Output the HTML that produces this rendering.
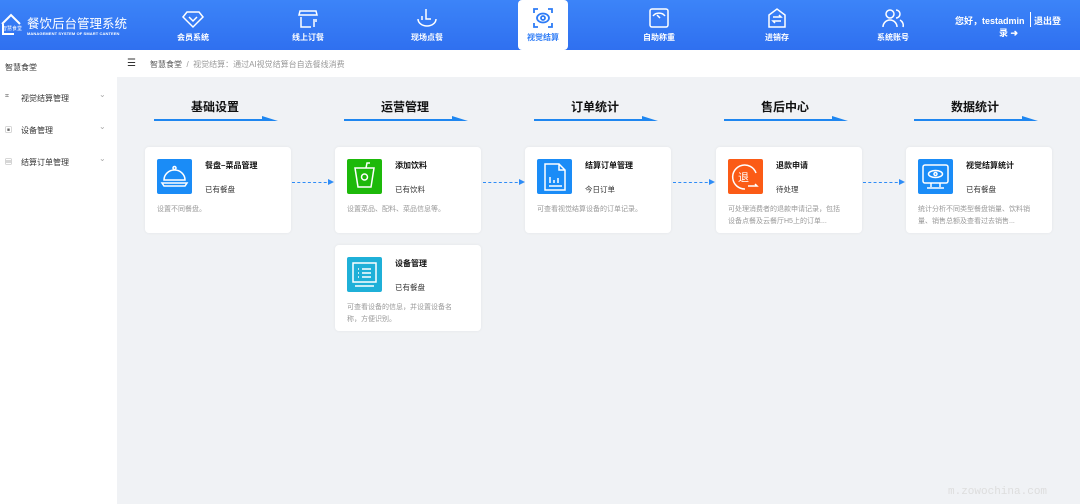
<!DOCTYPE html>
<html><head><meta charset="utf-8"><style>
*{margin:0;padding:0;box-sizing:border-box}
body{width:1080px;height:504px;overflow:hidden;font-family:"Liberation Sans","Noto Sans CJK SC",sans-serif;background:#f0f2f5;position:relative}
.hd{position:absolute;left:0;top:0;width:1080px;height:50px;background:linear-gradient(180deg,#3c84f8,#2f70f0)}
.logo{position:absolute;left:0;top:12px}
.nav{position:absolute;top:0;width:50px;height:50px;text-align:center;color:#fff;font-size:8px;font-weight:bold}
.nav svg{position:absolute;left:13px;top:6px}
.nav span{position:absolute;left:-20px;width:90px;top:32px}
.nav.act{background:#fff;color:#2e7cf6;border-radius:4px}
.sb{position:absolute;left:0;top:50px;width:117px;height:454px;background:#fff}
.sb div{position:absolute;left:0;font-size:8px;color:#333;width:117px;height:12px}
.sb .i{position:absolute;left:5px;color:#666;font-size:7px}
.sb .x{position:absolute;left:21px}
.sb .c{position:absolute;left:99px;color:#aaa;top:-3px}
.bc{position:absolute;left:117px;top:50px;width:963px;height:27px;background:#fff;font-size:8px;color:#999}
.sec{position:absolute;top:98px;width:122px;text-align:center;font-size:12px;font-weight:bold;color:#111}
.ar{position:absolute;top:116px;width:124px;height:6px}
.card{position:absolute;width:146px;height:86px;background:#fff;border-radius:4px;box-shadow:0 0 3px rgba(0,0,0,.06)}
.ic{position:absolute;left:12px;top:12px;width:35px;height:35px;border-radius:2px}
.ic svg{position:absolute;left:0;top:0}
.t{position:absolute;left:60px;top:13px;font-size:8px;font-weight:bold;color:#111}
.s{position:absolute;left:60px;top:37px;font-size:7.5px;color:#333}
.d{position:absolute;left:12px;top:57px;width:112px;font-size:7px;line-height:12px;color:#999}
.dl{position:absolute;top:182px;height:0;border-top:1px dashed #2e8cf6;width:40px}
.dl:after{content:"";position:absolute;right:-2px;top:-4px;border-left:6px solid #2e8cf6;border-top:3.5px solid transparent;border-bottom:3.5px solid transparent}
</style></head><body>
<div class="hd">
 <div class="logo"><svg width="26" height="26" viewBox="0 0 26 26"><path d="M2 12 L11 3 L20 12" stroke="#fff" stroke-width="2" fill="none"/><path d="M3 12 V22 H14" stroke="#fff" stroke-width="2" fill="none"/><text x="2" y="18" font-size="5" fill="#fff" font-family="Noto Sans CJK SC">智慧食堂</text></svg></div>
 <div style="position:absolute;left:27px;top:13px;color:#fff;font-size:12.5px">餐饮后台管理系统</div>
 <div style="position:absolute;left:27px;top:31px;color:#fff;font-size:4px;font-weight:bold;letter-spacing:.1px">MANAGEMENT SYSTEM OF SMART CANTEEN</div>
 <div class="nav" style="left:168px"><svg width="24" height="24" viewBox="0 0 24 24" fill="none" stroke="#fff" stroke-width="1.5"><path d="M6 6h12l4 5-10 10L2 11z"/><path d="M8 11l4 4 4-4"/></svg><span>会员系统</span></div>
 <div class="nav" style="left:283px"><svg width="24" height="24" viewBox="0 0 24 24" fill="none" stroke="#fff" stroke-width="1.5"><path d="M4 5h16l1 4H3z"/><path d="M5 11v10h10M18 13v8M20 13v3"/></svg><span>线上订餐</span></div>
 <div class="nav" style="left:402px"><svg width="24" height="24" viewBox="0 0 24 24" fill="none" stroke="#fff" stroke-width="1.5"><path d="M3 13a9 7 0 0 0 18 0"/><path d="M11 3v10h5M7 10v4"/></svg><span>现场点餐</span></div>
 <div class="nav act" style="left:518px"><svg width="24" height="24" viewBox="0 0 24 24" fill="none" stroke="#2e7cf6" stroke-width="1.8"><path d="M3 7V3h4M17 3h4v4M21 17v4h-4M7 21H3v-4"/><ellipse cx="12" cy="12" rx="6" ry="4.5"/><circle cx="12" cy="12" r="2"/></svg><span>视觉结算</span></div>
 <div class="nav" style="left:634px"><svg width="24" height="24" viewBox="0 0 24 24" fill="none" stroke="#fff" stroke-width="1.5"><rect x="3" y="3" width="18" height="18" rx="2"/><path d="M6 10a7 6 0 0 1 12 0M10 9l3 3"/></svg><span>自助称重</span></div>
 <div class="nav" style="left:752px"><svg width="24" height="24" viewBox="0 0 24 24" fill="none" stroke="#fff" stroke-width="1.5"><path d="M4 9l8-6 8 6v12H4z"/><path d="M8 11h8l-2-2M16 15H8l2 2"/></svg><span>进销存</span></div>
 <div class="nav" style="left:868px"><svg width="24" height="24" viewBox="0 0 24 24" fill="none" stroke="#fff" stroke-width="1.5"><circle cx="9" cy="8" r="4"/><path d="M2 21a7 7 0 0 1 14 0M15 4a4 4 0 0 1 0 8M19 14a6 6 0 0 1 3 7"/></svg><span>系统账号</span></div>
 <div style="position:absolute;left:955px;top:14px;color:#fff;font-size:9px;font-weight:bold">您好，testadmin</div>
 <div style="position:absolute;left:1030px;top:12px;height:15px;border-left:1px solid #fff"></div>
 <div style="position:absolute;left:1034px;top:14px;color:#fff;font-size:9px;font-weight:bold">退出登</div>
 <div style="position:absolute;left:999px;top:26px;color:#fff;font-size:9px;font-weight:bold">录 ➜</div>
</div>
<div class="sb">
 <div style="top:12px"><span style="position:absolute;left:5px">智慧食堂</span></div>
 <div style="top:43px"><span class="i">⌗</span><span class="x">视觉结算管理</span><span class="c">⌄</span></div>
 <div style="top:75px"><span class="i">▣</span><span class="x">设备管理</span><span class="c">⌄</span></div>
 <div style="top:107px"><span class="i">▤</span><span class="x">结算订单管理</span><span class="c">⌄</span></div>
</div>
<div class="bc"><span style="position:absolute;left:10px;top:8px;color:#333;font-size:10px">☰</span><span style="position:absolute;left:33px;top:9px"><b style="color:#555;font-weight:normal">智慧食堂</b> &nbsp;/&nbsp; 视觉结算：通过AI视觉结算台自选餐线消费</span></div>

<div class="sec" style="left:154px">基础设置</div>
<div class="sec" style="left:344px">运营管理</div>
<div class="sec" style="left:534px">订单统计</div>
<div class="sec" style="left:724px">售后中心</div>
<div class="sec" style="left:914px">数据统计</div>
<svg class="ar" style="left:154px" viewBox="0 0 124 6"><path d="M0 3h108V0l16 5H0z" fill="#1e86f0"/></svg>
<svg class="ar" style="left:344px" viewBox="0 0 124 6"><path d="M0 3h108V0l16 5H0z" fill="#1e86f0"/></svg>
<svg class="ar" style="left:534px" viewBox="0 0 124 6"><path d="M0 3h108V0l16 5H0z" fill="#1e86f0"/></svg>
<svg class="ar" style="left:724px" viewBox="0 0 124 6"><path d="M0 3h108V0l16 5H0z" fill="#1e86f0"/></svg>
<svg class="ar" style="left:914px" viewBox="0 0 124 6"><path d="M0 3h108V0l16 5H0z" fill="#1e86f0"/></svg>

<div class="dl" style="left:292px"></div>
<div class="dl" style="left:483px"></div>
<div class="dl" style="left:673px"></div>
<div class="dl" style="left:863px"></div>

<div class="card" style="left:145px;top:147px"><div class="ic" style="background:#1a8cf7"><svg width="35" height="35" viewBox="0 0 35 35" fill="none" stroke="#fff" stroke-width="1.5"><circle cx="17.5" cy="9" r="1.5"/><path d="M7 21a10.5 10 0 0 1 21 0zM5 24h25l-2 3H7z"/></svg></div><div class="t">餐盘–菜品管理</div><div class="s">已有餐盘</div><div class="d">设置不同餐盘。</div></div>
<div class="card" style="left:335px;top:147px"><div class="ic" style="background:#1db90a"><svg width="35" height="35" viewBox="0 0 35 35" fill="none" stroke="#fff" stroke-width="1.5"><path d="M8 9h19l-3 19H11z"/><circle cx="17.5" cy="18" r="3"/><path d="M19 9l1-5h3"/></svg></div><div class="t">添加饮料</div><div class="s">已有饮料</div><div class="d">设置菜品、配料、菜品信息等。</div></div>
<div class="card" style="left:525px;top:147px"><div class="ic" style="background:#1a8cf7"><svg width="35" height="35" viewBox="0 0 35 35" fill="none" stroke="#fff" stroke-width="1.5"><path d="M8 5h14l6 6v20H8zM22 5v6h6"/><path d="M12 27h13M13 18v6M17 21v3M21 19v5"/></svg></div><div class="t">结算订单管理</div><div class="s">今日订单</div><div class="d" style="width:130px">可查看视觉结算设备的订单记录。</div></div>
<div class="card" style="left:716px;top:147px"><div class="ic" style="background:#fb5b16"><svg width="35" height="35" viewBox="0 0 35 35" fill="none" stroke="#fff" stroke-width="1.5"><path d="M28 14A12 12 0 1 0 17 30"/><path d="M20 27h9l-2-2"/><text x="10" y="22" font-size="11" fill="#fff" stroke="none" font-family="Noto Sans CJK SC">退</text></svg></div><div class="t">退款申请</div><div class="s">待处理</div><div class="d">可处理消费者的退款申请记录，包括设备点餐及云餐厅H5上的订单...</div></div>
<div class="card" style="left:906px;top:147px"><div class="ic" style="background:#1a8cf7"><svg width="35" height="35" viewBox="0 0 35 35" fill="none" stroke="#fff" stroke-width="1.5"><rect x="5" y="6" width="25" height="18" rx="2"/><ellipse cx="17.5" cy="15" rx="7" ry="3.5"/><circle cx="17.5" cy="15" r="1.5"/><path d="M13 24v4M22 24v4M9 29h17"/></svg></div><div class="t">视觉结算统计</div><div class="s">已有餐盘</div><div class="d">统计分析不同类型餐盘销量、饮料销量、销售总额及查看过去销售...</div></div>
<div class="card" style="left:335px;top:245px"><div class="ic" style="background:#1fb0d8"><svg width="35" height="35" viewBox="0 0 35 35" fill="none" stroke="#fff" stroke-width="1.5"><rect x="6" y="6" width="23" height="19"/><path d="M11 12h1M15 12h9M11 16h1M15 16h9M11 20h1M15 20h9M8 29h19"/></svg></div><div class="t">设备管理</div><div class="s">已有餐盘</div><div class="d">可查看设备的信息，并设置设备名称，方便识别。</div></div>
<div style="position:absolute;left:948px;top:486px;font-size:11px;color:#ddd;font-family:'Liberation Mono',monospace">m.zowochina.com</div>
</body></html>
